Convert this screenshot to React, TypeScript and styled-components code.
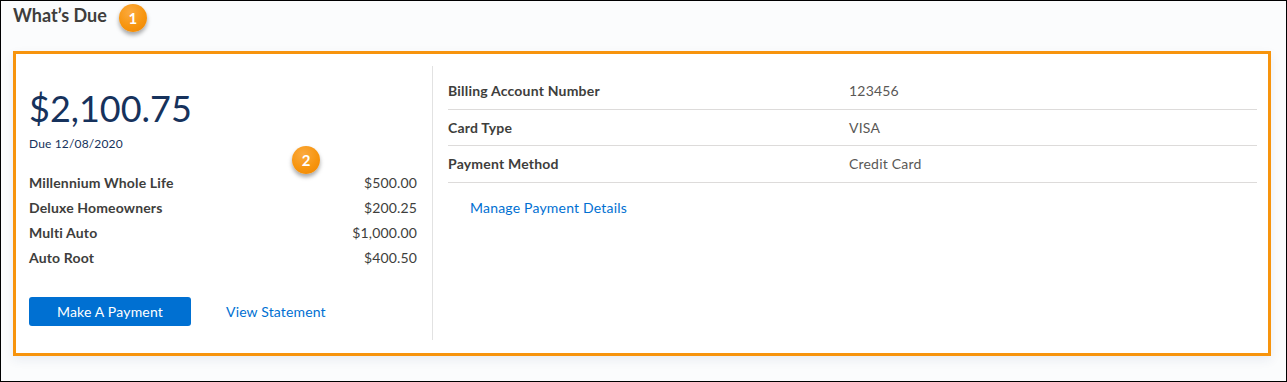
import styled, { createGlobalStyle } from "styled-components";

// Types
interface DueItem {
  id: number;
  name: string;
  amount: string;
}

interface DetailRow {
  id: number;
  label: string;
  value: string;
}

const GlobalStyle = createGlobalStyle`
  html, body {
    margin: 0;
    padding: 0;
    background: #ffffff;
  }
  body {
    font-family: Lato, "Open Sans", "Liberation Sans", sans-serif;
    color: #3e3e3c;
  }
  * {
    box-sizing: border-box;
  }
`;

// Styled Components
const Page = styled.div`
  width: 1287px;
  height: 382px;
  border: 1px solid #000000;
  background: #fbfcfd;
  padding: 3px 15px 0 12px;
`;

const Header = styled.header`
  display: flex;
  align-items: flex-start;
  gap: 12px;
`;

const Title = styled.h1`
  margin: 0;
  font-size: 18px;
  line-height: 22px;
  font-weight: 700;
  color: #3e3e3c;
`;

const Badge = styled.span`
  display: inline-flex;
  align-items: center;
  justify-content: center;
  width: 28px;
  height: 28px;
  border-radius: 50%;
  background: radial-gradient(circle at 40% 30%, #fbaa3f 0%, #f7950f 55%, #ee8500 100%);
  box-shadow: 0 3px 4px rgba(0, 0, 0, 0.35);
  color: #ffffff;
  font-size: 15px;
  font-weight: 700;
  line-height: 1;
`;

const FloatingBadge = styled(Badge)`
  position: absolute;
  left: 276px;
  top: 92px;
`;

const Card = styled.section`
  position: relative;
  margin-top: 19px;
  width: 1258px;
  height: 305px;
  border: 3px solid #f7940d;
  background: #ffffff;
  box-shadow: 0 4px 10px rgba(40, 60, 110, 0.08);
  padding: 12px 0 13px 0;
  display: grid;
  grid-template-columns: 416px 1fr;
`;

const LeftPanel = styled.div`
  padding: 22px 15px 0 13px;
  display: flex;
  flex-direction: column;
  letter-spacing: 0.15px;
`;

const Amount = styled.div`
  font-size: 36px;
  line-height: 40px;
  color: #16325c;
  letter-spacing: 0;
`;

const DueDate = styled.div`
  margin-top: 8px;
  font-size: 12px;
  line-height: 16px;
  color: #16325c;
`;

const ItemList = styled.div`
  margin-top: 18px;
  display: flex;
  flex-direction: column;
`;

const ItemRow = styled.div`
  display: flex;
  justify-content: space-between;
  font-size: 14px;
  line-height: 25px;
`;

const ItemName = styled.span`
  font-weight: 700;
  color: #3e3e3c;
`;

const ItemAmount = styled.span`
  color: #3e3e3c;
`;

const Actions = styled.div`
  margin-top: 27px;
  display: flex;
  align-items: center;
  gap: 35px;
`;

const PrimaryButton = styled.button`
  width: 162px;
  height: 29px;
  border: none;
  border-radius: 3px;
  background: #0070d2;
  color: #ffffff;
  font-family: inherit;
  font-size: 14px;
  font-weight: 400;
  letter-spacing: 0.2px;
  cursor: pointer;
`;

const LinkText = styled.a<{ $indent?: number }>`
  color: #0070d2;
  font-size: 14px;
  line-height: 20px;
  text-decoration: none;
  cursor: pointer;
  margin-left: ${(p) => p.$indent ?? 0}px;
`;

const RightPanel = styled.div`
  border-left: 1px solid #e2e2e2;
  padding: 7px 11px 0 15px;
  display: flex;
  flex-direction: column;
  letter-spacing: 0.2px;
`;

const DetailLine = styled.div`
  display: grid;
  grid-template-columns: 401px 1fr;
  height: 36.5px;
  border-bottom: 1px solid #dddbda;
  font-size: 14px;
  line-height: 35.5px;
`;

const DetailLabel = styled.span`
  font-weight: 700;
  color: #3e3e3c;
`;

const DetailValue = styled.span`
  color: #5a5856;
`;

const ManageRow = styled.div`
  margin-top: 14px;
`;

export default function App() {
  const items: DueItem[] = [
    { id: 1, name: "Millennium Whole Life", amount: "$500.00" },
    { id: 2, name: "Deluxe Homeowners", amount: "$200.25" },
    { id: 3, name: "Multi Auto", amount: "$1,000.00" },
    { id: 4, name: "Auto Root", amount: "$400.50" },
  ];

  const details: DetailRow[] = [
    { id: 1, label: "Billing Account Number", value: "123456" },
    { id: 2, label: "Card Type", value: "VISA" },
    { id: 3, label: "Payment Method", value: "Credit Card" },
  ];

  return (
    <>
      <GlobalStyle />
      <Page>
        <Header>
          <Title>What’s Due</Title>
          <Badge>1</Badge>
        </Header>
        <Card>
          <FloatingBadge>2</FloatingBadge>
          <LeftPanel>
            <Amount>$2,100.75</Amount>
            <DueDate>Due 12/08/2020</DueDate>
            <ItemList>
              {items.map((item) => (
                <ItemRow key={item.id}>
                  <ItemName>{item.name}</ItemName>
                  <ItemAmount>{item.amount}</ItemAmount>
                </ItemRow>
              ))}
            </ItemList>
            <Actions>
              <PrimaryButton>Make A Payment</PrimaryButton>
              <LinkText>View Statement</LinkText>
            </Actions>
          </LeftPanel>
          <RightPanel>
            {details.map((row) => (
              <DetailLine key={row.id}>
                <DetailLabel>{row.label}</DetailLabel>
                <DetailValue>{row.value}</DetailValue>
              </DetailLine>
            ))}
            <ManageRow>
              <LinkText $indent={22}>Manage Payment Details</LinkText>
            </ManageRow>
          </RightPanel>
        </Card>
      </Page>
    </>
  );
}
